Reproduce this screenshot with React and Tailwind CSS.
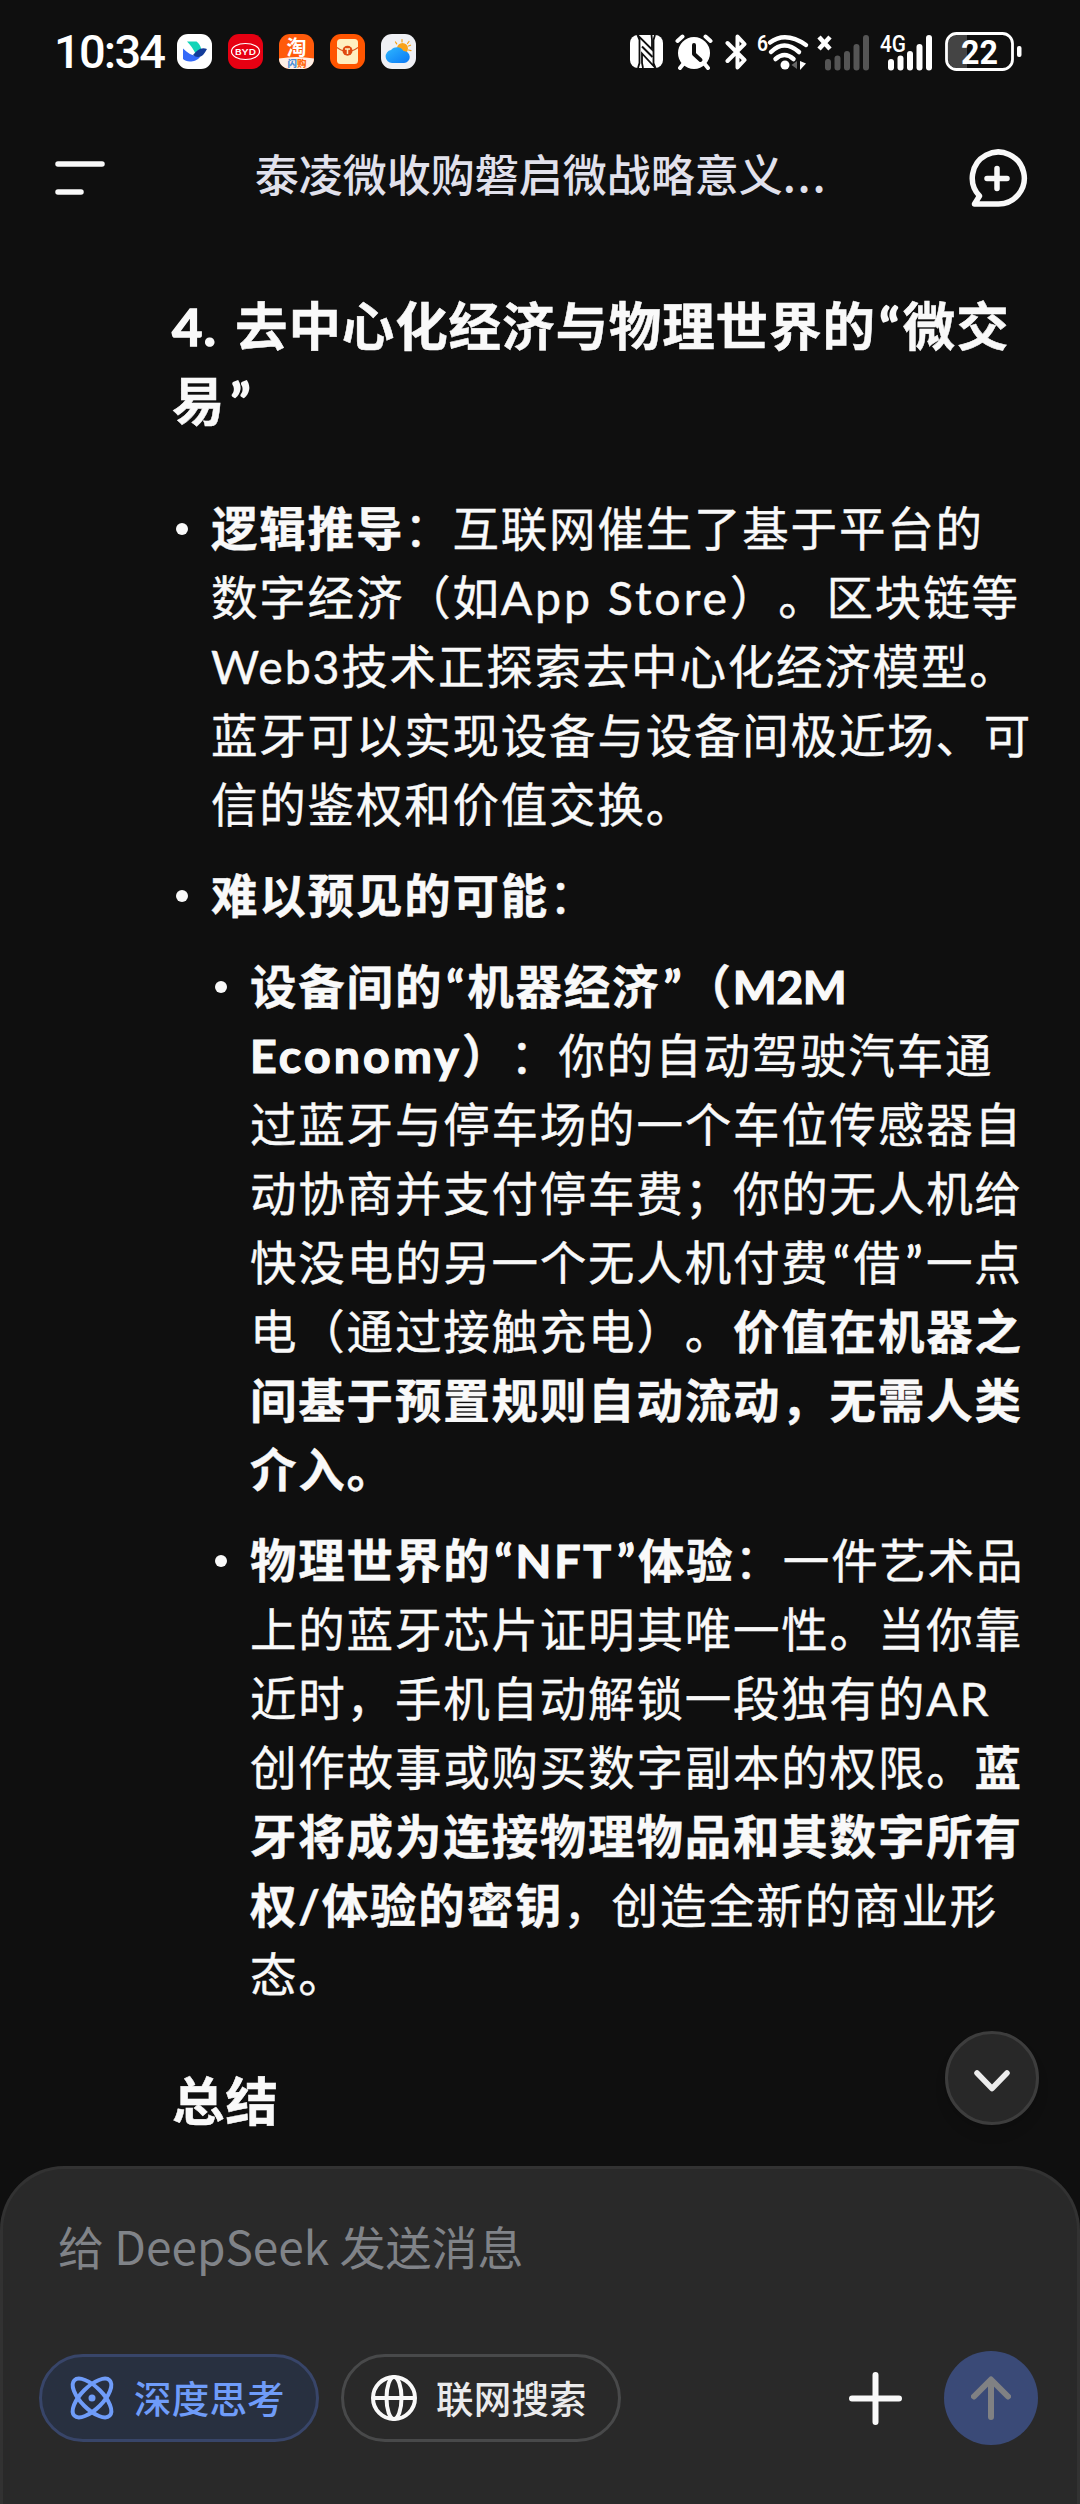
import React from 'react';
import { clsx } from 'clsx';

const Line = ({ children }) => <div className="whitespace-nowrap">{children}</div>;

// Half-width curly quotes
const Quote = ({ children }) => (
  <span className="inline-block w-[24px] text-center tracking-normal [-webkit-text-stroke:1px]">{children}</span>
);

const Item = ({ children }) => (
  <li className="flex">
    <span className="mt-[29px] mr-[23px] ml-[4px] size-[12px] shrink-0 rounded-full bg-[#f9f9f9]" />
    <div>{children}</div>
  </li>
);

const AppIcon = ({ children }) => (
  <svg className="size-[35px] overflow-visible" viewBox="0 0 35 35">
    {children}
  </svg>
);

const AppIcons = () => (
  <div className="flex gap-[16px]">
    <AppIcon>
      <rect width="35" height="35" rx="11" fill="#fff" />
      <path d="M10 7.500h9.500c2.500 1.500 4 4.500 4.700 7.500l-5.500 5C16.500 15 13.500 11 10 7.500z" fill="#14d4b8" />
      <path d="M6 14.500c4.500 4.500 9 7.500 15.500 7.500l2 .5c-3 4-7 5-10.500 5-3 0-5.500-1-7-2.500z" fill="#3469f8" />
      <path d="M16 21c4-4.500 8-8.500 14-6-2.500 4-4 8-9 8-2 0-3.500-1-5-2z" fill="#123b99" />
    </AppIcon>
    <AppIcon>
      <rect width="35" height="35" rx="11" fill="#e60012" />
      <ellipse cx="17.500" cy="17.500" rx="14" ry="8" fill="none" stroke="#fff" strokeWidth="1.200" />
      <text x="17.500" y="20.500" textAnchor="middle" textLength="21" lengthAdjust="spacingAndGlyphs" fontSize="8" fontWeight="600" fontFamily="Inter, sans-serif" fill="#fff">BYD</text>
    </AppIcon>
    <AppIcon>
      <rect width="35" height="35" rx="11" fill="#ff5a0a" />
      <path d="M0 24.500q17.500-3 35 0a10.500 10.500 0 0 1-11 10.500H11A10.500 10.500 0 0 1 0 24.500z" fill="#fff0e6" />
      <text x="17.500" y="20.500" textAnchor="middle" fontSize="20" fontWeight="700" fontFamily="Noto Sans CJK SC, sans-serif" fill="#fff">淘</text>
      <text x="18" y="33" textAnchor="middle" fontSize="9.500" fontWeight="800" fontFamily="Noto Sans CJK SC, sans-serif" fill="#ff6a10"><tspan fill="#4a8fd8">闪</tspan>购</text>
    </AppIcon>
    <AppIcon>
      <rect width="35" height="35" rx="11" fill="#ff5500" />
      <rect x="7" y="5" width="21" height="25" rx="3.500" fill="#ffefc0" />
      <path d="M7 13.500q10.500 8 21 0" fill="none" stroke="#d85520" strokeWidth="1.200" />
      <circle cx="17.500" cy="16.800" r="5" fill="#e04a10" />
      <path d="M15 15h5M17.500 15v5" stroke="#ffefc0" strokeWidth="1.500" />
    </AppIcon>
    <AppIcon>
      <defs>
        <linearGradient id="cloud" x1="0" y1="0" x2="1" y2="1">
          <stop offset="0" stopColor="#2fb8ff" />
          <stop offset="1" stopColor="#0a78f5" />
        </linearGradient>
      </defs>
      <rect width="35" height="35" rx="11" fill="#eff0f5" />
      <path d="M21 5.500v2.500M14.500 8l1.200 1.800M28 7.500l-1.500 2M27.500 16l2.500.6M27.500 12l2-.8" stroke="#f7a010" strokeWidth="1.200" strokeLinecap="round" />
      <circle cx="21.500" cy="14.500" r="5.500" fill="#f9a31a" />
      <path d="M11 29a6.500 6.500 0 0 1-1-12.900A7.500 7.500 0 0 1 22.500 17a6 6 0 0 1 .5 12z" fill="url(#cloud)" />
    </AppIcon>
  </div>
);

const bars = [
  { x: 0, top: 24 },
  { x: 9.5, top: 20.5 },
  { x: 19, top: 16 },
  { x: 28.5, top: 9 },
  { x: 38, top: 0 },
];

const SignalBars = ({ className }) => (
  <g className={className}>
    {bars.map((bar) => (
      <rect key={bar.x} x={bar.x + 8} y={bar.top + 2} width="6" height={35.5 - bar.top} rx="3" />
    ))}
  </g>
);

const StatusBar = () => (
  <div className="flex h-[103px] items-center pr-[58px] pl-[54px]">
    <span className="w-[123px] font-['Roboto',sans-serif] text-[47px] leading-none font-medium tracking-[-1.8px] text-white">10:34</span>
    <AppIcons />
    <div className="ml-auto flex items-center text-white">
      {/* NFC */}
      <svg className="h-[33px] w-[33px]" viewBox="0 0 33 33">
        <rect width="33" height="33" rx="8" fill="#fff" />
        <path d="M7.500 0L9.500 5v23l-1.500 5M7.500 0L22 14.500V5l-.5-5" fill="none" stroke="#0f0f0f" strokeWidth="1.800" />
        <path d="M25.500 33l-2-5V5L25 0M25.500 33L12 18.500V28l1 5" fill="none" stroke="#0f0f0f" strokeWidth="1.800" />
        <path d="M12 11.500l10.500 10.500" stroke="#0f0f0f" strokeWidth="2" />
      </svg>
      {/* Alarm */}
      <svg className="ml-[12px] h-[36px] w-[38px]" viewBox="0 0 38 36">
        <path d="M2.500 7l5-4.500M35.500 7l-5-4.500M9 29l-4 5M29 29l4 5" stroke="#fff" strokeWidth="4" strokeLinecap="round" />
        <circle cx="19" cy="19" r="16" fill="#fff" />
        <path d="M19 11v9l6.500 6" fill="none" stroke="#0f0f0f" strokeWidth="4" strokeLinecap="round" strokeLinejoin="round" />
      </svg>
      {/* Bluetooth */}
      <svg className="ml-[12px] h-[36px] w-[23px]" viewBox="0 0 23 36">
        <path d="M2.500 9l17 17-7 7.500V2.500l7 7.500-17 17" fill="none" stroke="#fff" strokeWidth="4" strokeLinecap="round" strokeLinejoin="round" />
      </svg>
      {/* Wi-Fi */}
      <svg className="ml-[9px] h-[38px] w-[52px] overflow-visible" viewBox="0 0 52 38">
        <text x="0" y="17.500" fontSize="22" fontWeight="600" textLength="11" lengthAdjust="spacingAndGlyphs" fontFamily="Roboto, sans-serif" fill="#fff">6</text>
        <path d="M13 9.500q15.500-11.500 36 2.500M14 19q13-13 28 0M18.500 26q9-8 18 0" fill="none" stroke="#fff" strokeWidth="4.500" strokeLinecap="round" />
        <circle cx="28" cy="32" r="4.500" fill="#fff" />
        <path d="M40 28v8l-5.500-4z" fill="#666" />
        <path d="M43 28v9l6-6.500z" fill="#fff" />
      </svg>
      {/* SIM 1, no service */}
      <svg className="ml-[8px] h-[38px] w-[54px]" viewBox="0 0 54 38">
        <path d="M2 4l11 12M13 4L2 16" stroke="#fff" strokeWidth="4.500" />
        <SignalBars className="fill-[#555]" />
      </svg>
      {/* SIM 2 */}
      <svg className="ml-[9px] h-[38px] w-[54px] overflow-visible" viewBox="0 0 54 38">
        <text x="0" y="18.500" fontSize="24" fontWeight="500" textLength="26" lengthAdjust="spacingAndGlyphs" fontFamily="Roboto, sans-serif" fill="#fff">4G</text>
        <SignalBars className="fill-white" />
      </svg>
      {/* Battery */}
      <svg className="ml-[11px] h-[39px] w-[77px] overflow-visible" viewBox="0 0 77 39">
        <path d="M22 3H12a9 9 0 0 0-9 9v15a9 9 0 0 0 9 9h10z" fill="#444" />
        <rect x="1.500" y="1.500" width="66" height="36" rx="10" fill="none" stroke="#fff" strokeWidth="2.800" />
        <rect x="72" y="14" width="4.500" height="11" rx="2" fill="#fff" />
        <text x="34.500" y="31.500" textAnchor="middle" fontSize="34" fontWeight="700" textLength="37" lengthAdjust="spacingAndGlyphs" fontFamily="Roboto, sans-serif" fill="#fff">22</text>
      </svg>
    </div>
  </div>
);

const Header = () => (
  <header className="flex h-[150px] items-center justify-between pr-[52px] pl-[55px]">
    <svg className="h-[34px] w-[50px]" viewBox="0 0 50 34">
      <path d="M3 3h44M3 31h23" stroke="#f9f9f9" strokeWidth="5.500" strokeLinecap="round" />
    </svg>
    <h1 className="mb-[10px] ml-[11px] text-[44px] leading-[60px] font-medium text-[#e1e1ec]">
      泰凌微收购磐启微战略意义<span className="tracking-[1.700px]">...</span>
    </h1>
    <svg className="size-[62px]" viewBox="0 0 62 62">
      <path d="M31 57H8.500l5-8A26 26 0 1 1 31 57z" fill="none" stroke="#f9f9f9" strokeWidth="5.500" strokeLinejoin="round" />
      <path d="M31 21.500v20M21 31.500h20" stroke="#f9f9f9" strokeWidth="5.500" strokeLinecap="round" />
    </svg>
  </header>
);

const Pill = ({ icon, label, active }) => (
  <button
    className={clsx(
      'flex h-[88px] w-[280px] items-center rounded-full border-3 pl-[26px] text-[37.5px] font-medium',
      active ? 'border-[#384569] bg-[#283040] text-[#6f9cf9]' : 'border-[#48494a] text-[#ebebec]'
    )}
  >
    {icon}
    <span className="mb-[2px] ml-[18px] leading-none tracking-[0.2px]">{label}</span>
  </button>
);

const AtomIcon = () => (
  <svg className="size-[48px] shrink-0" viewBox="0 0 48 48" fill="none" stroke="currentColor" strokeWidth="4">
    <ellipse cx="24" cy="24" rx="25" ry="11" transform="rotate(45 24 24)" />
    <ellipse cx="24" cy="24" rx="25" ry="11" transform="rotate(-45 24 24)" />
    <circle cx="24" cy="24" r="3.500" fill="currentColor" stroke="none" />
  </svg>
);

const GlobeIcon = () => (
  <svg className="size-[48px] shrink-0" viewBox="0 0 48 48" fill="none" stroke="#f9f9f9" strokeWidth="4">
    <circle cx="24" cy="24" r="21" />
    <ellipse cx="24" cy="24" rx="7.500" ry="21" />
    <path d="M3 24h42" />
  </svg>
);

const Composer = () => (
  <footer className="absolute inset-x-0 bottom-0 flex h-[338px] flex-col rounded-t-[64px] border-x-3 border-t-3 border-[#323232] bg-[#292929]">
    <p className="mt-[41px] ml-[55px] text-[46px] leading-[70px] text-[#808388]">给 DeepSeek 发送消息</p>
    <div className="mt-[74px] flex items-center pr-[39px] pl-[36px]">
      <Pill icon={<AtomIcon />} label="深度思考" active />
      <div className="ml-[22px]">
        <Pill icon={<GlobeIcon />} label="联网搜索" />
      </div>
      <svg className="ml-auto size-[53px]" viewBox="0 0 53 53">
        <path d="M26.500 3v47M3 26.500h47" stroke="#f9f9f9" strokeWidth="6" strokeLinecap="round" />
      </svg>
      <button className="my-[-3px] ml-[42px] flex size-[94px] items-center justify-center rounded-full bg-[#3a4a77]">
        <svg className="h-[44px] w-[40px]" viewBox="0 0 40 44">
          <path d="M20 41V4M3 20.500L20 3.500l17 17" fill="none" stroke="#808183" strokeWidth="6" strokeLinecap="round" strokeLinejoin="round" />
        </svg>
      </button>
    </div>
  </footer>
);

export default function App() {
  return (
    <div className="relative h-[2504px] w-[1080px] overflow-hidden bg-[#0f0f0f] font-['Noto_Sans_CJK_SC',sans-serif] text-[#f9f9f9] [text-spacing-trim:space-all]">
      <StatusBar />
      <Header />

      <main className="mt-[35px] pl-[172px] font-['Lato','Noto_Sans_CJK_SC',sans-serif]">
        <h2 className="text-[52.5px] leading-[75px] font-bold tracking-[0.9px] [-webkit-text-stroke:0.5px]">
          <Line>
            <span className="inline-block w-[63px] tracking-[1px] [-webkit-text-stroke:1.5px]">4. </span>去中心化经济与物理世界的
            <span className="inline-block w-[27px] text-center tracking-normal [-webkit-text-stroke:1.5px]">“</span>微交
          </Line>
          <Line>
            易<span className="inline-block w-[30px] text-center tracking-normal [-webkit-text-stroke:1.5px]">”</span>
          </Line>
        </h2>

        <ul className="mt-[56px] flex flex-col gap-[22px] text-[46.5px] leading-[69px] tracking-[1.8px] [-webkit-text-stroke:0.4px]">
          <Item>
            <Line><b>逻辑推导</b>：互联网催生了基于平台的</Line>
            <Line>数字经济（如<span className="tracking-[2.900px]">App Store</span>）。区块链等</Line>
            <Line>Web3技术正探索去中心化经济模型。</Line>
            <Line>蓝牙可以实现设备与设备间极近场、可</Line>
            <Line>信的鉴权和价值交换。</Line>
          </Item>
          <Item>
            <Line><b>难以预见的可能</b>：</Line>
            <ul className="mt-[22px] flex flex-col gap-[22px]">
              <Item>
                <Line><b>设备间的<Quote>“</Quote>机器经济<Quote>”</Quote>（<span className="tracking-[-0.5px] [-webkit-text-stroke:1.2px]">M2M</span></b></Line>
                <Line><b><span className="tracking-[3.100px] [-webkit-text-stroke:1.2px]">Economy</span>）</b>：你的自动驾驶汽车通</Line>
                <Line>过蓝牙与停车场的一个车位传感器自</Line>
                <Line>动协商并支付停车费；你的无人机给</Line>
                <Line>快没电的另一个无人机付费<Quote>“</Quote>借<Quote>”</Quote>一点</Line>
                <Line>电（通过接触充电）。<b>价值在机器之</b></Line>
                <Line><b>间基于预置规则自动流动，无需人类</b></Line>
                <Line><b>介入。</b></Line>
              </Item>
              <Item>
                <Line><b>物理世界的<Quote>“</Quote><span className="tracking-[2.800px] [-webkit-text-stroke:1.2px]">NFT</span><Quote>”</Quote>体验</b>：一件艺术品</Line>
                <Line>上的蓝牙芯片证明其唯一性。当你靠</Line>
                <Line>近时，手机自动解锁一段独有的AR</Line>
                <Line>创作故事或购买数字副本的权限。<b>蓝</b></Line>
                <Line><b>牙将成为连接物理物品和其数字所有</b></Line>
                <Line><b>权/体验的密钥</b>，创造全新的商业形</Line>
                <Line>态。</Line>
              </Item>
            </ul>
          </Item>
        </ul>

        <h2 className="mt-[54px] text-[52.5px] leading-[75px] font-bold tracking-[0.9px] [-webkit-text-stroke:0.5px]">总结</h2>
      </main>

      <button className="absolute top-[2031px] left-[945px] flex size-[94px] items-center justify-center rounded-full border-3 border-[#3d3d3d] bg-[#282828] shadow-lg">
        <svg className="mt-[6px] h-[24px] w-[38px]" viewBox="0 0 38 24">
          <path d="M4 4l15 15.500L34 4" fill="none" stroke="#ececec" strokeWidth="5.500" strokeLinecap="round" strokeLinejoin="round" />
        </svg>
      </button>

      <Composer />
    </div>
  );
}
